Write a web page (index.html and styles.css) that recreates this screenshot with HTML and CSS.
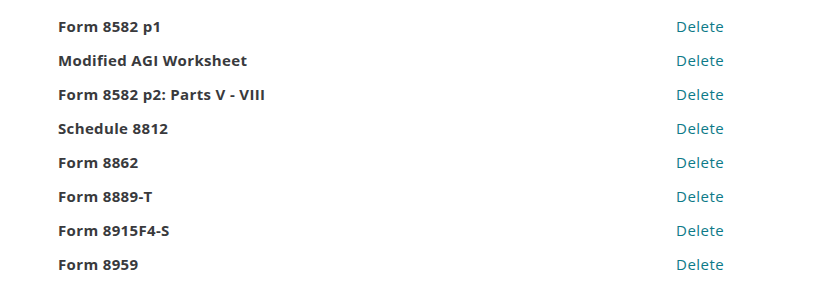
FILE: index.html
```html
<!DOCTYPE html>
<html>
<head>
<meta charset="utf-8">
<link rel="stylesheet" href="styles.css">
</head>
<body>
<ul class="forms">
  <li class="row"><span class="name">Form 8582 p1</span><a class="delete" href="#">Delete</a></li>
  <li class="row"><span class="name">Modified AGI Worksheet</span><a class="delete" href="#">Delete</a></li>
  <li class="row"><span class="name">Form 8582 p2: Parts V - VIII</span><a class="delete" href="#">Delete</a></li>
  <li class="row"><span class="name">Schedule 8812</span><a class="delete" href="#">Delete</a></li>
  <li class="row"><span class="name">Form 8862</span><a class="delete" href="#">Delete</a></li>
  <li class="row"><span class="name">Form 8889-T</span><a class="delete" href="#">Delete</a></li>
  <li class="row"><span class="name">Form 8915F4-S</span><a class="delete" href="#">Delete</a></li>
  <li class="row"><span class="name">Form 8959</span><a class="delete" href="#">Delete</a></li>
</ul>
</body>
</html>
```
FILE: styles.css
```css
html, body {
  margin: 0;
  padding: 0;
  background: #ffffff;
}
body {
  font-family: "Open Sans", "Liberation Sans", sans-serif;
  font-size: 15px;
  color: #393a3d;
}
.forms {
  list-style: none;
  margin: 0;
  padding: 9px 0 0 58px;
}
.row {
  display: grid;
  grid-template-columns: 618px auto;
  height: 34px;
  align-items: center;
}
.name {
  font-weight: 700;
  letter-spacing: 0.35px;
}
.delete {
  color: #0d7a88;
  text-decoration: none;
  font-weight: 400;
  letter-spacing: 0.5px;
}
```
